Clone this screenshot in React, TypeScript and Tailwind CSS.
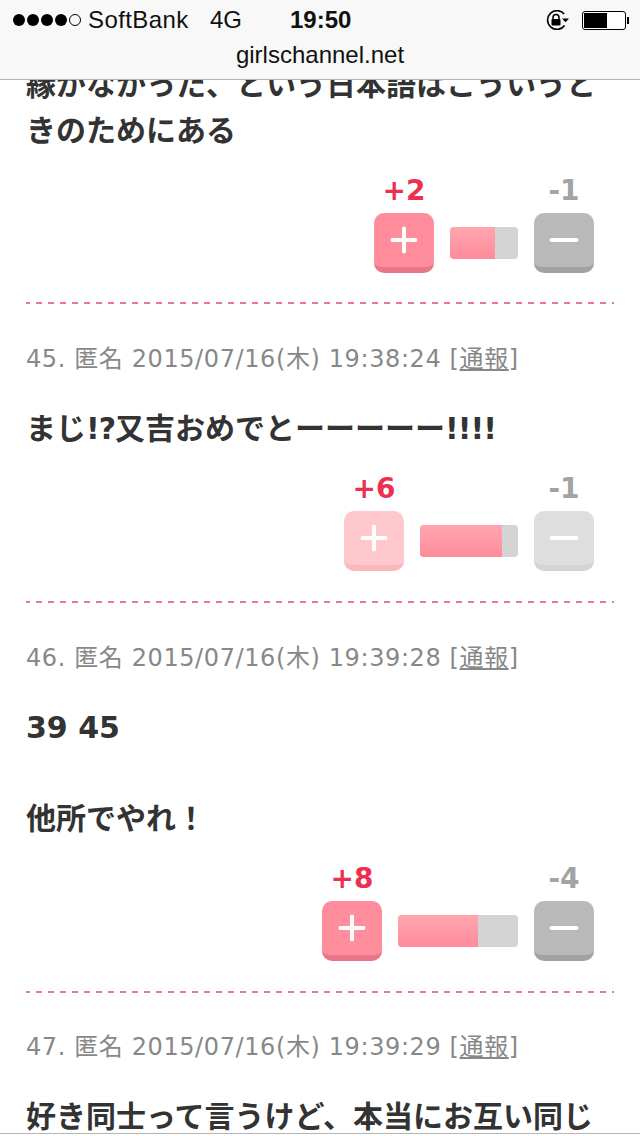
import React from 'react';

const jpSans = "font-['DejaVu_Sans','Noto_Sans_CJK_JP',sans-serif]";

const PlusIcon = () => (
  <svg width="30" height="30" viewBox="0 0 30 30">
    <path d="M15 3.5v23M3.5 15h23" stroke="#fff" strokeWidth="4" strokeLinecap="round" />
  </svg>
);

const MinusIcon = () => (
  <svg width="30" height="30" viewBox="0 0 30 30">
    <path d="M2.5 15h25" stroke="#fff" strokeWidth="4" strokeLinecap="round" />
  </svg>
);

const VoteBar: React.FC<{ plus: number; minus: number; faded?: boolean; barClass: string; split: number }> = ({
  plus,
  minus,
  faded,
  barClass,
  split,
}) => (
  <div className="flex justify-end items-end">
    <div className="flex flex-col items-center w-[60px]">
      <span className="text-[28px] leading-[32px] font-bold text-[#ee3050] mb-[6px] whitespace-nowrap">+{plus}</span>
      <div
        className={
          faded
            ? 'w-[60px] h-[60px] rounded-[10px] bg-[#ffc8cd] border-b-[6px] border-[#f8b8be] flex items-center justify-center'
            : 'w-[60px] h-[60px] rounded-[10px] bg-[#ff8d9c] border-b-[6px] border-[#e57787] flex items-center justify-center'
        }
      >
        <PlusIcon />
      </div>
    </div>
    <div className={`${barClass} h-[32px] mx-[16px] mb-[14px] rounded-[4px] overflow-hidden bg-[#d4d4d4]`}>
      <div
        className="h-full bg-gradient-to-b from-[#ffa6b0] to-[#ff8b9a]"
        style={{ width: `${split}%` }}
      />
    </div>
    <div className="flex flex-col items-center w-[60px]">
      <span className="text-[28px] leading-[32px] font-bold text-[#a3a3a3] mb-[6px]">-{minus}</span>
      <div
        className={
          faded
            ? 'w-[60px] h-[60px] rounded-[10px] bg-[#dedede] border-b-[6px] border-[#d4d4d4] flex items-center justify-center'
            : 'w-[60px] h-[60px] rounded-[10px] bg-[#b9b9b9] border-b-[6px] border-[#a1a1a1] flex items-center justify-center'
        }
      >
        <MinusIcon />
      </div>
    </div>
  </div>
);

const Meta: React.FC<{ no: number; time: string }> = ({ no, time }) => (
  <p className="text-[24px] leading-[32px] tracking-[0.6px] text-[#888888] whitespace-nowrap">
    {no}. 匿名 2015/07/16(木) {time} [<span className="underline">通報</span>]
  </p>
);

const Dashed: React.FC<{ className: string }> = ({ className }) => (
  <div
    className={`h-[2px] ${className} bg-[repeating-linear-gradient(90deg,#e27a93_0,#e27a93_4px,transparent_4px,transparent_10px,#e27a93_10px,#e27a93_12px)]`}
  />
);

const App: React.FC = () => {
  return (
    <div className={`w-[640px] h-[1136px] overflow-hidden flex flex-col bg-white ${jpSans}`}>
      <header className="h-[80px] shrink-0 bg-[#f8f8f8] border-b border-[#b4b4b4] font-['Liberation_Sans',sans-serif] text-[#111111]">
        <div className="h-[40px] flex items-center pl-[13px] pr-[11px] text-[24px]">
          <div className="flex gap-[2px] w-[68px]">
            {[0, 1, 2, 3].map((i) => (
              <span key={i} className="w-[12px] h-[12px] rounded-full bg-black" />
            ))}
            <span className="w-[12px] h-[12px] rounded-full border border-black" />
          </div>
          <span className="ml-[7px] w-[122px] tracking-[0.4px]">SoftBank</span>
          <span>4G</span>
          <span className="ml-[48px] font-bold">19:50</span>
          <div className="ml-auto flex items-center gap-[13px]">
            <svg width="23" height="20" viewBox="0 0 23 20" fill="none">
              <path d="M18.2 4A9.4 9.4 0 1 0 18.6 15.5" stroke="#000" strokeWidth="1.6" />
              <path d="M16 8.5h7l-3.5 3.8z" fill="#000" />
              <path d="M7 9V7.5a3 3 0 0 1 6 0V9" stroke="#000" strokeWidth="1.5" />
              <rect x="5.5" y="9" width="9" height="6.5" rx="1" fill="#000" />
            </svg>
            <div className="flex items-center">
              <div className="w-[44px] h-[19px] border border-black rounded-[3px] p-[1px] bg-white">
                <div className="w-[23px] h-full bg-black" />
              </div>
              <div className="ml-[1px] w-[2px] h-[7px] bg-black" />
            </div>
          </div>
        </div>
        <p className="mt-[2px] text-center text-[24px] leading-[26px]">girlschannel.net</p>
      </header>

      <main className="flex-1 min-h-0 overflow-hidden px-[26px] text-[#333333]">
        <div className="-mt-[18px]">
          <p className="text-[30px] leading-[45.5px] font-bold">縁がなかった、という日本語はこういうときのためにある</p>
          <div className="pr-[20px] mt-[22px]">
            <VoteBar plus={2} minus={1} barClass="w-[68px]" split={66} />
          </div>
          <Dashed className="mt-[29px]" />

          <div className="mt-[39px]">
            <Meta no={45} time="19:38:24" />
          </div>
          <p className="mt-[31px] text-[30px] leading-[45.5px] font-bold">
            まじ<span className="tracking-[-1px]">!?</span>又吉おめでとーーーーー<span className="tracking-[-1px]">!!!!</span>
          </p>
          <div className="pr-[20px] mt-[21px]">
            <VoteBar plus={6} minus={1} faded barClass="w-[98px]" split={84} />
          </div>
          <Dashed className="mt-[30px]" />

          <div className="mt-[39px]">
            <Meta no={46} time="19:39:28" />
          </div>
          <p className="mt-[31px] text-[30px] leading-[45.5px] font-bold">
            39 45
            <br />
            <br />
            他所でやれ！
          </p>
          <div className="pr-[20px] mt-[22px]">
            <VoteBar plus={8} minus={4} barClass="w-[120px]" split={67} />
          </div>
          <Dashed className="mt-[30px]" />

          <div className="mt-[38px]">
            <Meta no={47} time="19:39:29" />
          </div>
          <p className="mt-[31px] text-[30px] leading-[45.5px] font-bold">好き同士って言うけど、本当にお互い同じ</p>
        </div>
      </main>
      <div className="h-[3px] shrink-0 bg-white border-t border-[#b4b4b4]" />
    </div>
  );
};

export default App;
